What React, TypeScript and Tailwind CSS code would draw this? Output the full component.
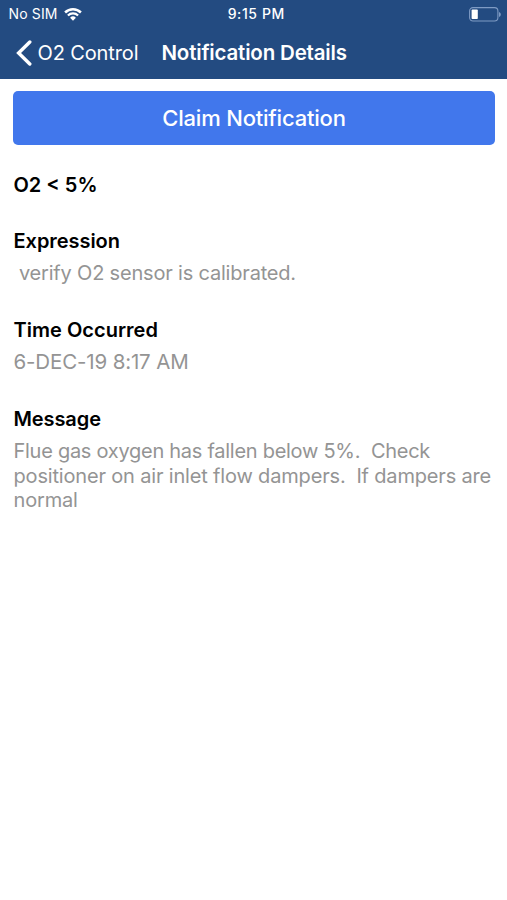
interface Detail {
  label: string;
  labelStyle: string;
  lines: { text: string; style: string }[];
}

const DETAILS: Detail[] = [
  {
    label: "Expression",
    labelStyle: "tracking-[-0.05px]",
    lines: [{ text: " verify O2 sensor is calibrated.", style: "tracking-[-0.19px]" }],
  },
  {
    label: "Time Occurred",
    labelStyle: "tracking-[0.02px]",
    lines: [{ text: "6-DEC-19 8:17 AM", style: "text-[20.5px] tracking-[-0.15px]" }],
  },
  {
    label: "Message",
    labelStyle: "tracking-[-0.1px]",
    lines: [
      { text: "Flue gas oxygen has fallen below 5%.  Check", style: "tracking-[-0.27px]" },
      { text: "positioner on air inlet flow dampers.  If dampers are", style: "tracking-[-0.17px]" },
      { text: "normal", style: "tracking-[-0.17px]" },
    ],
  },
];

function WifiIcon() {
  return (
    <svg width="18" height="13" viewBox="0 0 18 13" fill="none" stroke="#fff">
      <path d="M1.1 4.5a11.3 11.3 0 0 1 15.8 0" strokeWidth="2.5" />
      <path d="M3.9 7.5a7.2 7.2 0 0 1 10.2 0" strokeWidth="2.2" />
      <path d="M9 12.7 6.1 9.8a4.1 4.1 0 0 1 5.8 0z" fill="#fff" stroke="none" />
    </svg>
  );
}

function BatteryIcon() {
  return (
    <svg width="32" height="15" viewBox="0 0 32 15" fill="none">
      <rect x="0.6" y="0.6" width="28.3" height="13.4" rx="3.4" stroke="#7f9bc4" strokeWidth="1.1" />
      <rect x="2.6" y="2.6" width="6.2" height="9.4" rx="0.8" fill="#fff" />
      <path d="M30 4.9v5c1.2-.4 1.8-1.4 1.8-2.5S31.2 5.3 30 4.9z" fill="#7f9bc4" />
    </svg>
  );
}

function StatusBar() {
  return (
    <div className="grid h-[28px] grid-cols-3 items-center pr-[6px] pl-[8.5px] text-[14px] leading-none">
      <div className="flex items-center gap-[6px]">
        <span className="tracking-[0.15px]">No SIM</span>
        <WifiIcon />
      </div>
      <span className="pl-[3px] text-center font-medium tracking-[0.6px]">9:15 PM</span>
      <div className="flex justify-end">
        <BatteryIcon />
      </div>
    </div>
  );
}

function NavBar() {
  return (
    <div className="flex h-[51px] items-center pb-px pl-[15.5px] text-[20px] leading-none">
      <button type="button" className="flex items-center gap-[6px] tracking-[-0.12px]">
        <svg width="16" height="26" viewBox="0 0 16 26" fill="none">
          <path d="M13.8 2 2.6 13l11.2 11" stroke="#fff" strokeWidth="3.4" strokeLinecap="round" />
        </svg>
        <span>O2 Control</span>
      </button>
      <h1 className="ml-[23px] text-[20.5px] font-semibold tracking-[-0.17px]">
        Notification Details
      </h1>
    </div>
  );
}

export default function App() {
  return (
    <div className="min-h-[900px] w-full bg-white font-['Inter',sans-serif]">
      <header className="h-[79px] bg-[#234b81] text-white">
        <StatusBar />
        <NavBar />
      </header>

      <main className="px-[13px] pt-[12px]">
        <button
          type="button"
          className="h-[54px] w-[482px] rounded-[5px] bg-[#4177ec] text-[22px] font-medium tracking-[-0.2px] text-white"
        >
          Claim Notification
        </button>

        <div className="pl-[0.5px] text-[20px] leading-[24.5px]">
          <h2 className="mt-[28px] font-semibold text-black">O2 &lt; 5%</h2>

          <div className="mt-[31.5px] flex flex-col gap-[32.5px]">
            {DETAILS.map((detail) => (
              <section key={detail.label}>
                <h3 className={`mb-[7.5px] font-semibold text-black ${detail.labelStyle}`}>
                  {detail.label}
                </h3>
                {detail.lines.map((line) => (
                  <p key={line.text} className={`whitespace-pre text-[#949494] ${line.style}`}>
                    {line.text}
                  </p>
                ))}
              </section>
            ))}
          </div>
        </div>
      </main>
    </div>
  );
}
